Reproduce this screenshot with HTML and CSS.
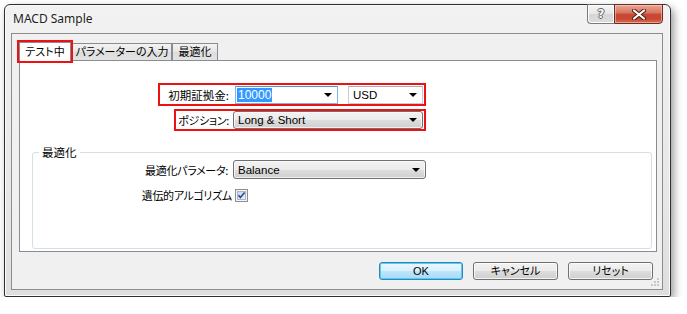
FILE: index.html
```html
<!DOCTYPE html>
<html lang="ja">
<head>
<meta charset="utf-8">
<title>MACD Sample</title>
<link rel="stylesheet" href="styles.css">
</head>
<body>
<div class="window">
  <div class="titlebar">
    <span class="title">MACD Sample</span>
    <div class="caption-btns">
      <div class="cap help"><span>?</span></div>
      <div class="cap close">
        <svg width="14" height="11" viewBox="0 0 14 11"><path d="M2 1.5 L12 9.5 M12 1.5 L2 9.5" stroke="#4a1a12" stroke-width="4" stroke-linecap="round"/><path d="M2 1.5 L12 9.5 M12 1.5 L2 9.5" stroke="#fff" stroke-width="2.2" stroke-linecap="round"/></svg>
      </div>
    </div>
  </div>
  <div class="client">
    <div class="tabs">
      <div class="tab active">テスト中</div>
      <div class="tab t2">パラメーターの入力</div>
      <div class="tab t3">最適化</div>
    </div>
    <div class="panel">
      <div class="mark row-a">
        <span class="lbl lbl-a">初期証拠金:</span>
        <div class="combo edit focused w-a"><span class="sel">10000</span><i class="arrow"></i></div>
        <div class="combo edit w-usd"><span class="val">USD</span><i class="arrow"></i></div>
      </div>
      <div class="mark row-b">
        <span class="lbl lbl-b">ポジション:</span>
        <div class="combo list w-b"><span class="val">Long &amp; Short</span><i class="arrow"></i></div>
      </div>
      <fieldset class="group">
        <legend>最適化</legend>
        <div class="grow">
          <span class="glbl">最適化パラメータ:</span>
          <div class="combo list w-c"><span class="val">Balance</span><i class="arrow"></i></div>
        </div>
        <div class="grow grow2">
          <span class="glbl glbl2">遺伝的アルゴリズム</span>
          <svg class="check" width="13" height="13" viewBox="0 0 13 13">
            <defs><linearGradient id="cg" x1="0" y1="0" x2="1" y2="1"><stop offset="0" stop-color="#c6d4ea"/><stop offset="1" stop-color="#f0f5fc"/></linearGradient></defs>
            <rect x="0.5" y="0.5" width="12" height="12" fill="#f4f4f4" stroke="#8e8f8f"/>
            <rect x="2.5" y="2.5" width="8" height="8" fill="url(#cg)" stroke="#a9b7cc"/>
            <path d="M3.5 6.3 L5.4 8.6 L9.6 3.6" fill="none" stroke="#2a4a9c" stroke-width="1.6"/>
          </svg>
        </div>
      </fieldset>
    </div>
    <div class="buttons">
      <button class="btn default">OK</button>
      <button class="btn">キャンセル</button>
      <button class="btn">リセット</button>
    </div>
    <svg class="grip" width="9" height="9" viewBox="0 0 9 9" fill="#c8c8c8">
      <rect x="6" y="0" width="2" height="2"/>
      <rect x="3" y="3" width="2" height="2"/><rect x="6" y="3" width="2" height="2"/>
      <rect x="0" y="6" width="2" height="2"/><rect x="3" y="6" width="2" height="2"/><rect x="6" y="6" width="2" height="2"/>
    </svg>
  </div>
</div>
</body>
</html>
```
FILE: styles.css
```css
html, body {
  margin: 0;
  padding: 0;
  background: #ffffff;
}
body {
  font-family: "Liberation Sans", "Noto Sans CJK JP", sans-serif;
  font-size: 12px;
  color: #000;
  font-feature-settings: "palt";
}
.window {
  box-sizing: border-box;
  margin: 4px 0 0 4px;
  width: 667px;
  height: 293px;
  border: 1px solid #2f2f2f;
  border-radius: 6px 6px 2px 2px;
  background: linear-gradient(#f2f2f2, #e6e6e6 70%, #dedede);
  box-shadow: 3px 4px 9px rgba(0,0,0,0.4), inset 0 0 0 1px #fbfbfb;
  padding: 0 7px 6px 6px;
  display: flex;
  flex-direction: column;
}
.titlebar {
  height: 28px;
  display: flex;
  align-items: flex-start;
  margin-left: -6px;
  margin-right: -7px;
  padding-left: 8px;
}
.title {
  font-family: "Noto Sans", "Liberation Sans", sans-serif;
  font-size: 12px;
  line-height: 28px;
  color: #1e1e1e;
  text-shadow: 0 0 5px #fff;
}
.caption-btns {
  margin-left: auto;
  margin-right: 7px;
  margin-top: -1px;
  display: flex;
}
.cap {
  box-sizing: border-box;
  height: 20px;
  border: 1px solid #7a7a7a;
  border-top-color: #5e5e5e;
  display: flex;
  align-items: center;
  justify-content: center;
}
.help {
  width: 27px;
  border-radius: 0 0 0 4px;
  border-right: none;
  background: linear-gradient(#f6f6f6, #e6e6e6 50%, #d6d6d6 51%, #dcdcdc);
  box-shadow: inset 0 0 0 1px #fff;
}
.help span {
  font-family: "DejaVu Sans", sans-serif;
  font-size: 12px;
  color: #f4f4f4;
  font-weight: bold;
  text-shadow: -1px 0 #666, 1px 0 #666, 0 -1px #666, 0 1px #666;
}
.close {
  width: 49px;
  border-radius: 0 0 4px 0;
  border-color: #6b2a22;
  background: linear-gradient(#e9a795, #d7735e 45%, #c84a35 50%, #c74630 75%, #d86c52);
  box-shadow: inset 0 0 0 1px rgba(255,220,210,0.5);
}
.client {
  position: relative;
  box-sizing: border-box;
  height: 257px;
  border: 1px solid #8d8d8d;
  background: #f0f0f0;
  display: flex;
  flex-direction: column;
}
.jp {
  font-family: "Noto Sans CJK JP", sans-serif;
}
.tabs {
  display: flex;
  align-items: flex-end;
  padding: 8px 0 0 7px;
  height: 18px;
  box-sizing: content-box;
}
.tab {
  box-sizing: border-box;
  height: 17px;
  border: 1px solid #898c95;
  border-bottom: none;
  background: linear-gradient(#f3f3f3, #e6e6e6 50%, #dcdcdc 51%, #e3e3e3);
  font-family: "Noto Sans CJK JP", sans-serif;
  font-size: 11px;
  font-weight: 400;
  line-height: 15px;
  text-align: center;
  white-space: nowrap;
}
.tab.active {
  position: relative;
  z-index: 1;
  height: 19px;
  width: 52px;
  margin-bottom: -1px;
  background: #ffffff;
  outline: 2px solid #ee1111;
  line-height: 17px;
}
.tab.t2 { width: 100px; margin-left: 1px; }
.tab.t3 { width: 46px; }
.panel {
  box-sizing: border-box;
  width: 638px;
  height: 192px;
  margin-left: 7px;
  border: 1px solid #898c95;
  background: #ffffff;
  padding-top: 22px;
  display: flex;
  flex-direction: column;
  align-items: flex-start;
}
.mark {
  box-sizing: border-box;
  border: 2px solid #ee1111;
  display: flex;
  align-items: center;
}
.row-a {
  margin-left: 138px;
  width: 268px;
  height: 23px;
}
.row-b {
  margin-left: 154px;
  width: 252px;
  height: 22px;
  margin-top: 3px;
}
.lbl, .glbl {
  box-sizing: border-box;
  text-align: right;
  font-family: "Noto Sans CJK JP", sans-serif;
  font-size: 11.5px;
  white-space: nowrap;
}
.lbl-a { width: 75px; padding-right: 6px; }
.lbl-b { width: 57px; padding-right: 4px; font-size: 11px; letter-spacing: -0.3px; }
.combo {
  box-sizing: border-box;
  height: 18px;
  display: flex;
  align-items: center;
  position: relative;
  font-size: 11.5px;
}
.combo .val { padding-left: 4px; }
.edit {
  background: #ffffff;
  border: 1px solid #c7ccd4;
  border-top-color: #abadb3;
}
.edit.focused {
  border-color: #7eb4ea;
  border-top-color: #5794bf;
}
.w-a { width: 103px; margin-right: 10px; }
.w-usd { width: 75px; }
.w-b { width: 190px; }
.w-c { width: 193px; height: 19px; }
.sel {
  margin-left: 1px;
  background: #3399ff;
  color: #fff;
  padding: 0 1px;
  line-height: 14px;
  font-size: 12px;
}
.list {
  border: 1px solid #707070;
  border-radius: 3px;
  background: linear-gradient(#f2f2f2, #ebebeb 50%, #dddddd 51%, #cfcfcf);
  box-shadow: inset 0 0 0 1px rgba(255,255,255,0.7);
}
.arrow {
  margin-left: auto;
  margin-right: 5px;
  width: 0;
  height: 0;
  border-left: 4px solid transparent;
  border-right: 4px solid transparent;
  border-top: 4px solid #000;
}
.group {
  box-sizing: border-box;
  margin: 13px 0 2px 12px;
  width: 620px;
  flex: 1;
  border: 1px solid #d5dfe5;
  border-radius: 3px;
  padding: 0;
  min-width: 0;
}
.group legend {
  margin-left: 6px;
  padding: 0 3px;
  font-family: "Noto Sans CJK JP", sans-serif;
  font-size: 11.5px;
  line-height: 16px;
}
.grow {
  display: flex;
  align-items: center;
}
.grow2 {
  margin-top: 9px;
  height: 14px;
}
.glbl {
  width: 200px;
  padding-right: 5px;
  font-size: 11px;
  letter-spacing: -0.3px;
}
.glbl2 { width: 202px; padding-right: 3px; }
.check { display: block; }
.buttons {
  display: flex;
  justify-content: flex-end;
  gap: 10px;
  margin-top: 10px;
  margin-right: 9px;
}
.btn {
  box-sizing: border-box;
  width: 85px;
  height: 18px;
  padding: 0;
  border: 1px solid #707070;
  border-radius: 3px;
  background: linear-gradient(#f2f2f2, #ebebeb 50%, #dddddd 51%, #cfcfcf);
  box-shadow: inset 0 0 0 1px rgba(255,255,255,0.75);
  font-family: "Liberation Sans", "Noto Sans CJK JP", sans-serif;
  font-size: 11px;
  line-height: 14px;
  color: #000;
  font-feature-settings: "palt";
}
.btn.default {
  width: 84px;
  border-color: #3c7fb1;
  background: linear-gradient(#eaf6fd, #d9f0fc 50%, #bee6fd 51%, #a7d9f5);
  box-shadow: inset 0 0 0 1px #48d1fb;
}
.grip {
  position: absolute;
  right: 2px;
  bottom: 2px;
}
```
